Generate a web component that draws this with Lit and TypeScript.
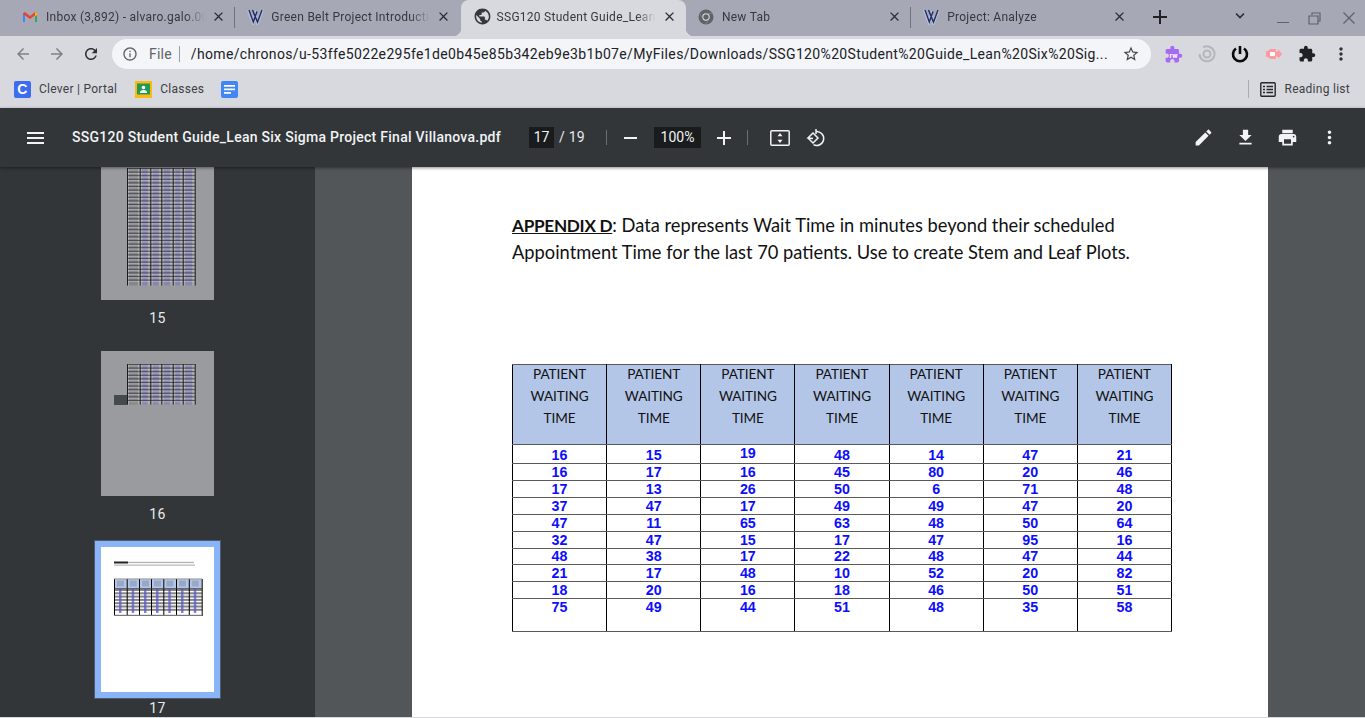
import { LitElement, html, css, svg } from "lit";
import { customElement } from "lit/decorators.js";

const P = {
  close: "M19 6.41L17.59 5 12 10.59 6.41 5 5 6.41 10.59 12 5 17.59 6.41 19 12 13.41 17.59 19 19 17.59 13.41 12z",
  back: "M20 11H7.83l5.59-5.59L12 4l-8 8 8 8 1.41-1.41L7.83 13H20v-2z",
  forward: "M12 4l-1.41 1.41L16.17 11H4v2h12.17l-5.58 5.59L12 20l8-8z",
  reload: "M17.65 6.35C16.2 4.9 14.21 4 12 4c-4.42 0-7.99 3.58-7.99 8s3.57 8 7.99 8c3.73 0 6.84-2.55 7.73-6h-2.08c-.82 2.33-3.04 4-5.65 4-3.31 0-6-2.69-6-6s2.69-6 6-6c1.66 0 3.14.69 4.22 1.78L13 11h7V4l-2.35 2.35z",
  info: "M11 7h2v2h-2zm0 4h2v6h-2zm1-9C6.48 2 2 6.48 2 12s4.48 10 10 10 10-4.48 10-10S17.52 2 12 2zm0 18c-4.41 0-8-3.59-8-8s3.59-8 8-8 8 3.59 8 8-3.59 8-8 8z",
  star: "M22 9.24l-7.19-.62L12 2 9.19 8.63 2 9.24l5.46 4.73L5.82 21 12 17.27 18.18 21l-1.63-7.03L22 9.24zM12 15.4l-3.76 2.27 1-4.28-3.32-2.88 4.38-.38L12 6.1l1.71 4.04 4.38.38-3.32 2.88 1 4.28L12 15.4z",
  puzzle: "M20.5 11H19V7c0-1.1-.9-2-2-2h-4V3.5C13 2.12 11.88 1 10.5 1S8 2.12 8 3.5V5H4c-1.1 0-1.99.9-1.99 2v3.8H3.5c1.49 0 2.7 1.21 2.7 2.7s-1.21 2.7-2.7 2.7H2V20c0 1.1.9 2 2 2h3.8v-1.5c0-1.49 1.21-2.7 2.7-2.7 1.49 0 2.7 1.21 2.7 2.7V22H17c1.1 0 2-.9 2-2v-4h1.5c1.38 0 2.5-1.12 2.5-2.5S21.88 11 20.5 11z",
  more: "M12 8c1.1 0 2-.9 2-2s-.9-2-2-2-2 .9-2 2 .9 2 2 2zm0 2c-1.1 0-2 .9-2 2s.9 2 2 2 2-.9 2-2-.9-2-2-2zm0 6c-1.1 0-2 .9-2 2s.9 2 2 2 2-.9 2-2-.9-2-2-2z",
  globe: "M12 2C6.48 2 2 6.48 2 12s4.48 10 10 10 10-4.48 10-10S17.52 2 12 2zm-1 17.93c-3.95-.49-7-3.85-7-7.93 0-.62.08-1.21.21-1.79L9 15v1c0 1.1.9 2 2 2v1.93zm6.9-2.54c-.26-.81-1-1.39-1.9-1.39h-1v-3c0-.55-.45-1-1-1H8v-2h2c.55 0 1-.45 1-1V7h2c1.1 0 2-.9 2-2v-.41c2.93 1.19 5 4.06 5 7.41 0 2.08-.8 3.97-2.1 5.39z",
  pencil: "M3 17.25V21h3.75L17.81 9.94l-3.75-3.75L3 17.25zM20.71 7.04c.39-.39.39-1.02 0-1.41l-2.34-2.34c-.39-.39-1.02-.39-1.41 0l-1.83 1.83 3.75 3.75 1.83-1.83z",
  download: "M19 9h-4V3H9v6H5l7 7 7-7zM5 18v2h14v-2H5z",
  print: "M19 8H5c-1.66 0-3 1.34-3 3v6h4v4h12v-4h4v-6c0-1.66-1.34-3-3-3zm-3 11H8v-5h8v5zm3-7c-.55 0-1-.45-1-1s.45-1 1-1 1 .45 1 1-.45 1-1 1zm-1-9H6v4h12V3z",
};

const icon = (d: string, size: number, color: string) => html`<svg width=${size} height=${size} viewBox="0 0 24 24" fill=${color}><path d=${d}></path></svg>`;

const gmail = html`<svg width="16" height="16" viewBox="0 0 16 16"><path d="M1 13V4l2 1v8z" fill="#4285f4"/><path d="M13 13V5l2-1v9z" fill="#34a853"/><path d="M1 4.2 3 3l5 4 5-4 2 1.200V5L8 10 1 5z" fill="#ea4335"/><path d="M13 3l2 1.200V6l-2 1.500z" fill="#fbbc04"/></svg>`;

const vLogo = html`<svg width="17" height="17" viewBox="0 0 17 17" fill="none"><path d="M1.500 2 6 14.500 8.500 7l2 7.500L15.500 2" stroke="#b9bed0" stroke-width="3"/><path d="M2 2 6.300 14 10 3.500M5.500 2 10.500 14 15 2" stroke="#1f2d6b" stroke-width="1.400"/></svg>`;

const chromeIcon = html`<svg width="16" height="16" viewBox="0 0 16 16"><circle cx="8" cy="8" r="7.500" fill="#5f6368"/><circle cx="8" cy="8" r="3.700" fill="#e4e5ea"/><circle cx="8" cy="8" r="2.700" fill="#5f6368"/><path d="M8 4.300h6.500M4.800 10 1.800 4.500M10.800 10.500 7.500 15.400" stroke="#8a8d95" stroke-width=".7"/></svg>`;

const tabs = [
  { title: "Inbox (3,892) - alvaro.galo.0000", ic: gmail },
  { title: "Green Belt Project Introduction", ic: vLogo },
  { title: "SSG120 Student Guide_Lean Six Sigma", ic: icon(P.globe, 19, "#34383c"), active: true },
  { title: "New Tab", ic: chromeIcon },
  { title: "Project: Analyze", ic: vLogo },
];

const headers = ["PATIENT", "WAITING", "TIME"];
const rows = [
  [16, 15, 19, 48, 14, 47, 21],
  [16, 17, 16, 45, 80, 20, 46],
  [17, 13, 26, 50, 6, 71, 48],
  [37, 47, 17, 49, 49, 47, 20],
  [47, 11, 65, 63, 48, 50, 64],
  [32, 47, 15, 17, 47, 95, 16],
  [48, 38, 17, 22, 48, 47, 44],
  [21, 17, 48, 10, 52, 20, 82],
  [18, 20, 16, 18, 46, 50, 51],
  [75, 49, 44, 51, 48, 35, 58],
];

// x positions of the vertical rules of the tiny tables, relative to the thumbnail
const miniCols = [26, 38.700, 49.300, 60.300, 71.700, 81.700, 93.700];

function miniTable(y0: number, y1: number, step: number) {
  const out = [];
  const h = y1 - y0 + step;
  out.push(svg`<rect x="26" y=${y0} width="68" height=${h} fill="#a9a9ad"></rect>`);
  miniCols.slice(0, 6).forEach((x, i) => {
    if (i === 0) {
      out.push(svg`<rect x=${x + 2} y=${y0} width="9" height=${h} fill="#77777a" opacity=".7"></rect>`);
      return;
    }
    out.push(svg`<rect x=${x + 2.500} y=${y0} width=${miniCols[i + 1] - x - 5} height=${h} fill="#6a6ab0" opacity=".55"></rect>`);
  });
  for (let y = y0; y <= y1; y += step) {
    out.push(svg`<rect x="26" y=${y} width="68" height="1" fill="#3a3b3e" opacity=".75"></rect>`);
    out.push(svg`<rect x="26" y=${y + 1.500} width="68" height=".8" fill="#d2d2d6" opacity=".55"></rect>`);
  }
  miniCols.forEach((x) => out.push(svg`<rect x=${x} y=${y0} width="1" height=${h} fill="#1b1c1e"></rect>`));
  return out;
}

function thumb17() {
  const cols = [13, 25.700, 38, 50, 62.300, 75, 87.800, 100.700];
  const out = [];
  out.push(svg`<rect x="13" y="14.500" width="14" height="2" fill="#222"></rect>`);
  out.push(svg`<rect x="27" y="14.800" width="66" height="1.300" fill="#b4b4b4"></rect>`);
  out.push(svg`<rect x="13" y="17.500" width="81" height="1.300" fill="#bcbcbc"></rect>`);
  out.push(svg`<rect x="13" y="32" width="88" height="9.500" fill="#b4c6e7"></rect>`);
  for (let y = 42; y < 65; y += 3.300) {
    out.push(svg`<rect x="13" y=${y} width="88" height="2" fill="#858588"></rect>`);
  }
  cols.slice(0, 7).forEach((x) => {
    out.push(svg`<rect x=${x + 5} y="42" width="2.500" height="24" fill="#5a5ac8" opacity=".75"></rect>`);
    out.push(svg`<rect x=${x + 3} y="33.500" width="7" height="6" fill="#9aa8c8"></rect>`);
  });
  cols.forEach((x) => out.push(svg`<rect x=${x} y="32" width="1" height="37" fill="#000"></rect>`));
  out.push(svg`<rect x="13" y="31.500" width="88" height=".8" fill="#888"></rect>`);
  out.push(svg`<rect x="13" y="41.300" width="88" height=".8" fill="#333"></rect>`);
  out.push(svg`<rect x="13" y="67.800" width="88" height="1.200" fill="#777"></rect>`);
  return out;
}

@customElement("app-root")
export class AppRoot extends LitElement {
  static styles = css`
    :host {
      display: block;
      width: 1365px;
      height: 718px;
      overflow: hidden;
      font-family: Roboto, "Liberation Sans", sans-serif;
      background: #d8d9df;
    }
    * { box-sizing: border-box; }
    svg { display: block; flex: none; }

    .strip { height: 36px; background: #a6a9b5; display: flex; align-items: stretch; padding-left: 10px; }
    .tab { position: relative; width: 225.300px; flex: none; display: flex; align-items: center; padding: 0 0 3px 12px; font-size: 12px; letter-spacing: .27px; color: #35383d; }
    .tab .ic { width: 24px; flex: none; }
    .tab .name { width: 162px; overflow: hidden; white-space: nowrap; -webkit-mask-image: linear-gradient(90deg, #000 86%, transparent 98%); mask-image: linear-gradient(90deg, #000 86%, transparent 98%); }
    .tab .x { margin-left: 3px; }
    .tab.sep::after { content: ""; position: absolute; right: 0; top: 7px; height: 21px; width: 1px; background: #6f727c; }
    .tab.active { background: #d8d9df; border-radius: 8px 8px 0 0; }
    .tab.active::before, .tab.active::after { content: ""; position: absolute; bottom: 0; width: 8px; height: 8px; }
    .tab.active::before { left: -8px; background: radial-gradient(circle at 0 0, transparent 8px, #d8d9df 8.500px); }
    .tab.active::after { right: -8px; background: radial-gradient(circle at 100% 0, transparent 8px, #d8d9df 8.500px); }
    .plus { margin-left: 16px; width: 20px; display: flex; align-items: center; padding-bottom: 3px; }
    .win { margin-left: auto; display: flex; align-items: center; }
    .win .chev { margin-right: 31px; margin-bottom: 4px; }
    .win .min { margin-right: 19px; margin-top: 9px; width: 12px; height: 1px; background: #5f6368; }
    .win .max { margin-right: 22px; }
    .win .shut { margin-right: 10px; }

    .nav { height: 36px; display: flex; align-items: center; padding-left: 14px; }
    .nav .btn { width: 34px; flex: none; display: flex; }
    .nav .btn.reload { width: 25px; }
    .omni { margin-left: 5px; width: 1039px; height: 30px; border-radius: 15px; background: #f4f5f9; display: flex; align-items: center; padding-left: 10px; font-size: 14px; color: #202124; }
    .omni .file { margin-left: 11px; color: #5f6368; letter-spacing: .2px; }
    .omni .bar { width: 1px; height: 16px; background: #9b9da3; margin: 0 11px 0 7px; }
    .omni .url { width: 917px; white-space: nowrap; overflow: hidden; letter-spacing: .35px; }
    .omni .star { margin-left: 14px; }
    .exts { display: flex; align-items: center; margin-left: 6px; }
    .exts .e { width: 33.400px; display: flex; justify-content: center; }

    .marks { height: 36px; display: flex; align-items: center; padding: 0 0 2px 14px; font-size: 12px; letter-spacing: .27px; color: #3c4043; }
    .mark { display: flex; align-items: center; gap: 8px; margin-right: 18px; }
    .tile { width: 17px; height: 17px; border-radius: 2px; display: flex; align-items: center; justify-content: center; }
    .tile.clever { background: #3b6cf2; color: #fff; font: 700 14px "Liberation Sans", sans-serif; }
    .docs { margin-left: -1px; }
    .reading { margin-left: auto; display: flex; align-items: center; padding-right: 15px; }
    .reading .bar { width: 1px; height: 18px; background: #a9abb2; margin-right: 11px; }
    .reading svg { margin-right: 8px; }

    .pdfbar { position: relative; z-index: 2; height: 59px; background: #323639; color: #f1f3f4; display: flex; align-items: center; font-size: 14px; box-shadow: 0 1px 3px rgba(0,0,0,.45); }
    .burger { margin-left: 27px; width: 17px; height: 12px; border-top: 2px solid #f1f3f4; border-bottom: 2px solid #f1f3f4; position: relative; }
    .burger::after { content: ""; position: absolute; left: 0; right: 0; top: 3px; height: 2px; background: #f1f3f4; }
    .title { margin-left: 28px; width: 457px; font-weight: 500; white-space: nowrap; letter-spacing: .27px; padding-bottom: 2px; }
    .box { background: #191b1c; height: 21px; display: flex; align-items: center; justify-content: center; padding-bottom: 2px; }
    .pg { width: 25px; }
    .of { margin-left: 5px; width: 47px; letter-spacing: .2px; color: #e8eaed; padding-bottom: 2px; }
    .vbar { width: 1px; height: 15px; background: #6b6f73; }
    .minus { margin: 0 17px; width: 13px; height: 2px; background: #f1f3f4; }
    .zoom { width: 47px; }
    .tplus { margin: 0 16px; }
    .fit { margin-left: 22px; }
    .rot { margin-left: 16px; }
    .right { margin-left: auto; display: flex; align-items: center; padding-right: 25px; gap: 21px; }

    .body { height: 550px; display: flex; }
    .side { width: 315px; flex: none; background: #323639; overflow: hidden; display: flex; flex-direction: column; align-items: center; color: #e8eaed; font-size: 14px; }
    .side > * { flex: none; }
    .thumb { width: 113px; background: #9a9b9e; }
    .thumb.first { height: 133px; }
    .thumb.plain { height: 145px; }
    .side .num { height: 51px; padding-top: 9px; line-height: 18px; text-align: center; letter-spacing: .3px; }
    .thumbsel { border: 6px solid #8ab4f8; outline: 1px solid #4d5a70; width: 125px; height: 157px; margin-top: -6px; }
    .thumbsel .thumb { background: #fff; height: 145px; }
    .side .num.last { padding-top: 1px; height: 20px; }

    .main { flex: 1; background: #525659; padding-left: 97px; }
    .page { width: 856px; height: 100%; background: #fff; padding: 45px 0 0 100px; color: #111; font-family: Lato, "Open Sans", sans-serif; }
    .para { font-size: 18.300px; line-height: 27px; white-space: nowrap; }
    .para b { text-decoration: underline; font-size: 17.200px; letter-spacing: -.3px; }
    table { margin-top: 98px; width: 660px; table-layout: fixed; border-collapse: collapse; border: 1px solid #222; }
    th, td { padding: 0; text-align: center; vertical-align: top; border-left: 1px solid #000; border-right: 1px solid #000; border-top: 1px solid #5a5a5a; border-bottom: 1px solid #5a5a5a; }
    th { background: #b4c6e7; height: 80px; font-weight: 400; font-size: 13.600px; letter-spacing: -.1px; line-height: 22px; color: #111; }
    th div:first-child { margin-top: -2px; }
    td { height: 17px; font: 700 14.300px/16px "Liberation Sans", Arial, sans-serif; color: #0d0dff; }
    tbody tr:first-child td { height: 19px; padding-top: 3px; line-height: 15px; }
    tbody tr:first-child td.up { padding-top: 0; line-height: 16px; }
    tbody tr:nth-child(7) td { height: 16px; line-height: 15px; }
    tbody tr:last-child td { height: 33px; }
  `;

  render() {
    return html`
      <div class="strip">
        ${tabs.map((t, i) => html`
          <div class="tab ${t.active ? "active" : ""} ${i === 0 || i === 3 ? "sep" : ""}">
            <span class="ic">${t.ic}</span>
            <span class="name">${t.title}</span>
            <span class="x">${icon(P.close, 15, "#2b2d31")}</span>
          </div>`)}
        <div class="plus"><svg width="16" height="16" viewBox="0 0 16 16" fill="#202124"><path d="M7 1h2v6h6v2H9v6H7V9H1V7h6z"/></svg></div>
        <div class="win">
          <svg class="chev" width="12" height="8" viewBox="0 0 12 8" fill="none" stroke="#2b2d31" stroke-width="1.600"><path d="M2 1.500l4 4 4-4"/></svg>
          <div class="min"></div>
          <svg class="max" width="13" height="13" viewBox="0 0 13 13" fill="none" stroke="#5f6368" stroke-width="1.200"><path d="M4 3V1h8v8h-2M1 4h9v8H1z"/></svg>
          <svg class="shut" width="12" height="12" viewBox="0 0 12 12" stroke="#5f6368" stroke-width="1.300"><path d="M.5.500l11 11M11.500.500l-11 11"/></svg>
        </div>
      </div>

      <div class="nav">
        <span class="btn">${icon(P.back, 18, "#7f8187")}</span>
        <span class="btn">${icon(P.forward, 18, "#7f8187")}</span>
        <span class="btn reload">${icon(P.reload, 18, "#2e3034")}</span>
        <div class="omni">
          ${icon(P.info, 16, "#5f6368")}
          <span class="file">File</span><span class="bar"></span>
          <span class="url">/home/chronos/u-53ffe5022e295fe1de0b45e85b342eb9e3b1b07e/MyFiles/Downloads/SSG120%20Student%20Guide_Lean%20Six%20Sig...</span>
          <span class="star">${icon(P.star, 18, "#44474c")}</span>
        </div>
        <div class="exts">
          <span class="e"><svg width="19" height="19" viewBox="0 0 24 24"><path d=${P.puzzle} fill="#a56bf0"/><text x="7" y="17" font-size="9" font-family="Roboto" font-weight="700" fill="#fff">rw</text></svg></span>
          <span class="e"><svg width="18" height="18" viewBox="0 0 18 18" fill="none" stroke="#b5b6bb" stroke-width="2"><path d="M5 2.500A7.500 7.500 0 1 1 1.500 9"/><circle cx="9" cy="9" r="3.500"/></svg></span>
          <span class="e"><svg width="18" height="18" viewBox="0 0 18 18" fill="none" stroke="#0a0a0a" stroke-width="2.600"><path d="M5 3.500a7 7 0 1 0 8 0M9 1v8"/></svg></span>
          <span class="e"><svg width="18" height="12" viewBox="0 0 18 12"><path d="M1 3h2l2-2h6v3l3-2 3 4-3 4-3-2v3H5L3 9H1z" fill="#ff9aa0"/><path d="M5 4h5v4H5z" fill="#fff"/></svg></span>
          <span class="e">${icon(P.puzzle, 18, "#202124")}</span>
          <span class="e">${icon(P.more, 20, "#303236")}</span>
        </div>
      </div>

      <div class="marks">
        <div class="mark"><span class="tile clever">C</span>Clever | Portal</div>
        <div class="mark">
          <svg width="17" height="17" viewBox="0 0 17 17"><rect width="17" height="17" fill="#f9bb12"/><rect x="2" y="2.500" width="13" height="11" fill="#209a55"/><circle cx="8.500" cy="6.500" r="1.800" fill="#fff"/><path d="M4.800 12c0-2 1.700-3 3.700-3s3.700 1 3.700 3z" fill="#fff"/></svg>
          Classes
        </div>
        <svg class="docs" width="17" height="17" viewBox="0 0 17 17"><rect width="17" height="17" rx="2" fill="#4285f4"/><path d="M3 4h11v1.700H3zM3 7.500h11v1.700H3zM3 11h7v1.700H3z" fill="#fff"/></svg>
        <div class="reading">
          <span class="bar"></span>
          <svg width="16" height="15" viewBox="0 0 16 15" fill="none" stroke="#25272b" stroke-width="1.400"><rect x=".8" y=".8" width="14.400" height="13.400" rx="1"/><path d="M3 4.500h2M6.500 4.500h6.500M3 7.500h2M6.500 7.500h6.500M3 10.500h2M6.500 10.500h6.500"/></svg>
          Reading list
        </div>
      </div>

      <div class="pdfbar">
        <div class="burger"></div>
        <div class="title">SSG120 Student Guide_Lean Six Sigma Project Final Villanova.pdf</div>
        <div class="box pg">17</div>
        <div class="of">/ 19</div>
        <div class="vbar"></div>
        <div class="minus"></div>
        <div class="box zoom">100%</div>
        <svg class="tplus" width="14" height="14" viewBox="0 0 14 14" fill="#f1f3f4"><path d="M6 0h2v6h6v2H8v6H6V8H0V6h6z"/></svg>
        <div class="vbar"></div>
        <svg class="fit" width="20" height="16" viewBox="0 0 20 16" fill="none" stroke="#f1f3f4" stroke-width="1.500"><rect x=".8" y=".8" width="18.400" height="14.400" rx="1"/><path d="M10 3l2.500 3.200h-5zM10 13l2.500-3.200h-5z" fill="#f1f3f4" stroke="none"/></svg>
        <svg class="rot" width="20" height="20" viewBox="0 0 20 20" fill="none" stroke="#f1f3f4" stroke-width="1.500"><path d="M7 10.500 2 10l5-5 5 5-5 5-5-5"/><path d="M10 3.500a7 7 0 1 1-2.500 13.200M10 1v5"/></svg>
        <div class="right">
          ${icon(P.pencil, 21, "#f1f3f4")}
          ${icon(P.download, 21, "#f1f3f4")}
          ${icon(P.print, 21, "#f1f3f4")}
          ${icon(P.more, 21, "#f1f3f4")}
        </div>
      </div>

      <div class="body">
        <div class="side">
          <div class="thumb first"><svg width="113" height="133">${miniTable(1, 115, 3.600)}</svg></div>
          <div class="num">15</div>
          <div class="thumb plain"><svg width="113" height="145">${miniTable(13, 50, 3.600)}<rect x="13" y="44" width="13" height="10" fill="#444a4e"></rect></svg></div>
          <div class="num">16</div>
          <div class="thumbsel"><div class="thumb"><svg width="113" height="145">${thumb17()}</svg></div></div>
          <div class="num last">17</div>
        </div>
        <div class="main">
          <div class="page">
            <div class="para"><b>APPENDIX D</b>: Data represents Wait Time in minutes beyond their scheduled</div>
            <div class="para">Appointment Time for the last 70 patients. Use to create Stem and Leaf Plots.</div>
            <table>
              <thead><tr>
                ${rows[0].map(() => html`<th>${headers.map((h) => html`<div>${h}</div>`)}</th>`)}
              </tr></thead>
              <tbody>
                ${rows.map((r, i) => html`<tr>${r.map((n, j) => html`<td class=${i === 0 && j === 2 ? "up" : ""}>${n}</td>`)}</tr>`)}
              </tbody>
            </table>
          </div>
        </div>
      </div>
    `;
  }
}
